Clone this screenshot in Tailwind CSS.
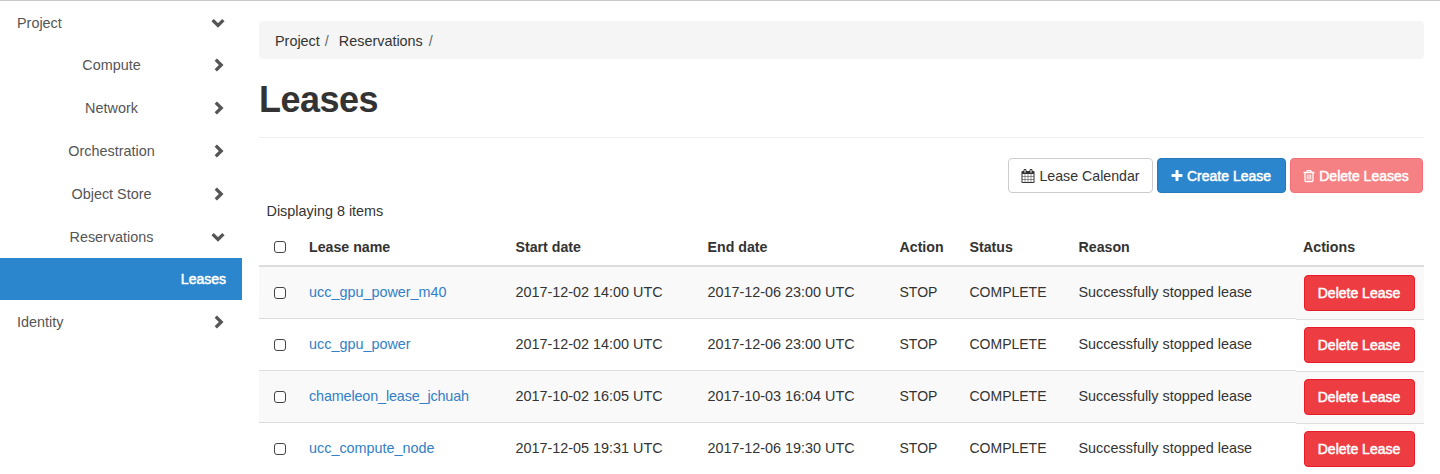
<!DOCTYPE html>
<html lang="en">
<head>
<meta charset="utf-8">
<title>Leases</title>
<script src="https://cdn.jsdelivr.net/npm/@tailwindcss/browser@4"></script>
</head>
<body class="bg-white">
<svg class="hidden">
  <symbol id="right" viewBox="0 0 14 14"><path d="M4.8 1.6 10.2 7 4.8 12.4" fill="none" stroke="currentColor" stroke-width="3.3"/></symbol>
  <symbol id="down" viewBox="0 0 14 14"><path d="M1.6 4.1 7 9.5 12.4 4.1" fill="none" stroke="currentColor" stroke-width="3.3"/></symbol>
</svg>
<div class="h-[474px] overflow-hidden border-t border-[#c9c9c9] flex font-['Liberation_Sans',Arial,sans-serif] text-[14.4px] leading-5 text-[#333]">
  <nav class="w-[242px] shrink-0 text-[#555]">
    <div class="h-[43px] flex items-center justify-between pl-[17px] pr-[17px]"><span>Project</span><svg class="size-3.5"><use href="#down"/></svg></div>
    <div class="-mt-px h-[43px] flex items-center pr-[17px]"><span class="flex-1 text-center pl-3">Compute</span><svg class="size-3.5"><use href="#right"/></svg></div>
    <div class="h-[43px] flex items-center pr-[17px]"><span class="flex-1 text-center pl-3">Network</span><svg class="size-3.5"><use href="#right"/></svg></div>
    <div class="h-[43px] flex items-center pr-[17px]"><span class="flex-1 text-center pl-3">Orchestration</span><svg class="size-3.5"><use href="#right"/></svg></div>
    <div class="h-[43px] flex items-center pr-[17px]"><span class="flex-1 text-center pl-3">Object Store</span><svg class="size-3.5"><use href="#right"/></svg></div>
    <div class="h-[43px] flex items-center pr-[17px]"><span class="flex-1 text-center pl-3">Reservations</span><svg class="size-3.5"><use href="#down"/></svg></div>
    <div class="h-[42px] flex items-center justify-end pr-4 bg-[#2c86cd] text-white text-[14px] [-webkit-text-stroke:0.5px_white]">Leases</div>
    <div class="h-[43px] flex items-center justify-between pl-[17px] pr-[17px]"><span>Identity</span><svg class="size-3.5"><use href="#right"/></svg></div>
  </nav>
  <main class="w-[1165px] ml-[17px] shrink-0 pt-5">
    <div class="h-[38px] rounded bg-[#f5f5f5] flex items-center px-4 pt-0.5"><span>Project</span><span class="ml-[5px] text-[#666]">/</span><span class="ml-[10px]">Reservations</span><span class="ml-[6px] text-[#666]">/</span></div>
    <h1 class="mt-5 h-10 pt-px text-[36px] leading-10 font-bold tracking-[-0.5px]">Leases</h1>
    <div class="mt-[18px] border-t border-[#eee]"></div>
    <div class="mt-5 flex justify-end gap-1 pr-px">
      <div class="w-[145px] h-[35px] rounded border border-[#ccc] flex items-center justify-center gap-1"><svg class="size-3.5" viewBox="0 0 1792 1792" fill="currentColor"><path d="M192 1664h288v-288h-288v288zm352 0h320v-288h-320v288zm-352-352h288v-320h-288v320zm352 0h320v-320h-320v320zm-352-384h288v-288h-288v288zm736 736h320v-288h-320v288zm-384-736h320v-288h-320v288zm768 736h288v-288h-288v288zm-384-352h320v-320h-320v320zm-352-864v-288q0-13-9.5-22.5t-22.5-9.5h-64q-13 0-22.5 9.5t-9.5 22.5v288q0 13 9.5 22.5t22.5 9.5h64q13 0 22.5-9.5t9.5-22.5zm736 864h288v-320h-288v320zm-384-384h320v-288h-320v288zm384 0h288v-288h-288v288zm32-480v-288q0-13-9.5-22.5t-22.5-9.5h-64q-13 0-22.5 9.5t-9.5 22.5v288q0 13 9.5 22.5t22.5 9.5h64q13 0 22.5-9.5t9.5-22.5zm384-64v1280q0 52-38 90t-90 38h-1408q-52 0-90-38t-38-90v-1280q0-52 38-90t90-38h128v-96q0-66 47-113t113-47h64q66 0 113 47t47 113v96h384v-96q0-66 47-113t113-47h64q66 0 113 47t47 113v96h128q52 0 90 38t38 90z"/></svg><span class="text-[14.2px]">Lease Calendar</span></div>
      <div class="w-[129px] h-[35px] rounded border border-[#2678b8] bg-[#2c86cd] text-white text-[14px] flex items-center justify-center gap-[3px] pr-0.5 [-webkit-text-stroke:0.5px_white]"><svg class="size-3.5" viewBox="0 0 1792 1792" fill="currentColor"><path d="M1600 736v192q0 40-28 68t-68 28h-416v416q0 40-28 68t-68 28h-192q-40 0-68-28t-28-68v-416h-416q-40 0-68-28t-28-68v-192q0-40 28-68t68-28h416v-416q0-40 28-68t68-28h192q40 0 68 28t28 68v416h416q40 0 68 28t28 68z"/></svg><span>Create Lease</span></div>
      <div class="w-[133px] h-[35px] rounded border border-[#f2707a] bg-[#f58184] text-white text-[14px] flex items-center justify-center gap-[3px] pr-0.5 [-webkit-text-stroke:0.5px_white]"><svg class="size-3.5" viewBox="0 0 1792 1792" fill="none" stroke="currentColor" stroke-width="165"><path d="M192 450h1408M600 440l80-230h432l80 230M384 450v1020q0 100 90 130h844q90-30 90-130V450"/><path stroke-width="125" d="M672 690v670M896 690v670M1120 690v670"/></svg><span>Delete Leases</span></div>
    </div>
    <div class="h-9 flex items-center pl-[7.5px]">Displaying 8 items</div>
    <div class="h-[38px] border-b-2 border-[#ddd] grid grid-cols-[42px_206.5px_192px_192px_70px_109px_224.5px_129px] items-center font-bold text-[14.2px] [&>*]:pl-2">
      <div><div class="ml-[7px] size-3 rounded-[3px] border border-[#444] bg-white"></div></div><div>Lease name</div><div>Start date</div><div>End date</div><div>Action</div><div>Status</div><div>Reason</div><div>Actions</div>
    </div>
    <div id="rows"></div>
  </main>
</div>
<template id="row">
  <div class="group h-[52px] odd:bg-[#f9f9f9] grid grid-rows-[52px] grid-cols-[42px_206.5px_192px_192px_70px_109px_225.5px_128px]">
    <div class="border-b border-[#ddd] flex items-center pl-[15px]"><div class="size-3 rounded-[3px] border border-[#444] bg-white"></div></div>
    <div class="border-b border-[#ddd] flex items-center pl-2 pb-0.5 text-[#337fc8] group-nth-3:tracking-[-0.15px]" data-f></div>
    <div class="border-b border-[#ddd] flex items-center pl-2 pb-0.5" data-f></div>
    <div class="border-b border-[#ddd] flex items-center pl-2 pb-0.5" data-f></div>
    <div class="border-b border-[#ddd] flex items-center pl-2 pb-0.5 text-[14px]">STOP</div>
    <div class="border-b border-[#ddd] flex items-center pl-2 pb-0.5 text-[14px]">COMPLETE</div>
    <div class="border-b border-[#ddd] flex items-center pl-2 pb-0.5">Successfully stopped lease</div>
    <div class="relative z-10 mt-px h-[52px] border-b border-[#ddd] pt-[7px] pl-2"><div class="w-[111px] h-9 rounded border border-[#e61d28] bg-[#ee3d42] text-white text-[14px] flex items-center justify-center pr-px [-webkit-text-stroke:0.5px_white]">Delete Lease</div></div>
  </div>
</template>
<script>
  const leases = [
    ["ucc_gpu_power_m40", "2017-12-02 14:00 UTC", "2017-12-06 23:00 UTC"],
    ["ucc_gpu_power", "2017-12-02 14:00 UTC", "2017-12-06 23:00 UTC"],
    ["chameleon_lease_jchuah", "2017-10-02 16:05 UTC", "2017-10-03 16:04 UTC"],
    ["ucc_compute_node", "2017-12-05 19:31 UTC", "2017-12-06 19:30 UTC"]
  ];
  const tpl = document.getElementById("row");
  for (const lease of leases) {
    const row = tpl.content.cloneNode(true);
    row.querySelectorAll("[data-f]").forEach((el, i) => { el.textContent = lease[i]; });
    document.getElementById("rows").append(row);
  }
</script>
</body>
</html>
